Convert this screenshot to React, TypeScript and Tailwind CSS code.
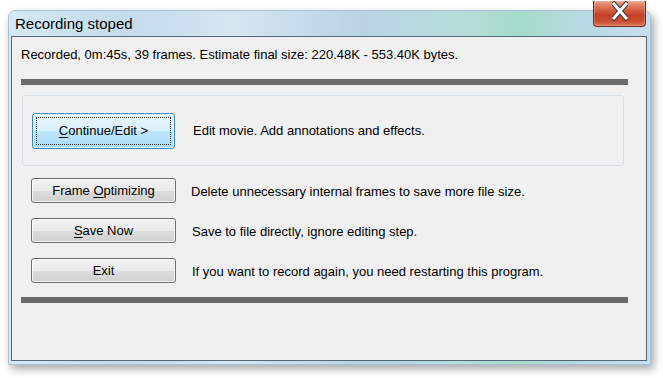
import type { ReactNode } from "react";

const font = { fontFamily: '"Liberation Sans", Arial, sans-serif' };

type ActionRowProps = {
  label: ReactNode;
  description: string;
  gap: string;
};

function GrayButton({ children }: { children: ReactNode }) {
  return (
    <button className="relative h-[25px] w-[145px] shrink-0 rounded-[3px] border border-[#707070] bg-[linear-gradient(180deg,#f2f2f2_0%,#ebebeb_50%,#dddddd_51%,#cfcfcf_100%)] text-[13px] text-black shadow-[inset_0_0_0_1px_rgba(255,255,255,0.8)]">
      {children}
    </button>
  );
}

function ActionRow({ label, description, gap }: ActionRowProps) {
  return (
    <div className={`ml-[10px] flex items-center ${gap}`}>
      <GrayButton>{label}</GrayButton>
      <span className="pt-[3px] text-[13px] text-black">{description}</span>
    </div>
  );
}

function CloseButton() {
  return (
    <div className="absolute right-[4px] top-[-10px] flex h-[26px] w-[53px] items-end justify-center rounded-b-[4px] border border-t-0 border-[#6e2a1c] bg-[linear-gradient(180deg,#e6a18c_0%,#d76a4f_30%,#c2432a_55%,#c94c31_80%,#dc7a5c_100%)] shadow-[inset_0_0_0_1px_rgba(255,200,180,0.35)]">
      {/* the X glyph is cut at the top, as in the screenshot */}
      <svg width="16" height="26" viewBox="0 0 16 26" className="mb-[0px]">
        <path
          d="M2 2 L14 16 M14 2 L2 16"
          stroke="#3c3c3c"
          strokeWidth="5"
          strokeLinecap="square"
          transform="translate(0,2)"
        />
        <path
          d="M2 2 L14 16 M14 2 L2 16"
          stroke="#ffffff"
          strokeWidth="3"
          strokeLinecap="square"
          transform="translate(0,2)"
        />
      </svg>
    </div>
  );
}

export default function App() {
  return (
    <div className="h-[378px] w-[663px] overflow-hidden bg-white" style={font}>
      <div className="relative ml-[8px] mt-[10px] flex h-[355px] w-[643px] flex-col rounded-t-[7px] border border-[#a9c2d6] bg-[linear-gradient(90deg,#d6e9f4_0%,#c3dbeb_18%,#d5e6f0_35%,#b9d3e4_55%,#b7dcd9_70%,#a6dccb_80%,#b9d9e3_90%,#c8deed_100%)] pb-[3px] pl-[2px] pr-[3px] shadow-[3px_4px_8px_rgba(0,0,0,0.35)]">
        <CloseButton />
        <div className="flex h-[25px] items-center pl-[4px] pt-[1px] text-[15px] text-black">
          Recording stoped
        </div>

        <div className="flex flex-1 flex-col border border-[#55677a] bg-[#f0f0f0] pl-[9px] pr-[18px]">
          <p className="mt-[10px] h-[16px] text-[13px] leading-[16px] text-black">
            Recorded, 0m:45s, 39 frames. Estimate final size: 220.48K - 553.40K bytes.
          </p>
          <div className="mt-[16px] h-[6px] bg-[#6b6b6b]" />

          <div className="ml-[1px] mr-[4px] mt-[10px] flex h-[71px] items-center rounded-[3px] border border-[#d5dfe7] pl-[9px]">
            <button className="relative flex h-[36px] w-[143px] shrink-0 items-center justify-center rounded-[3px] border border-[#3c8dbd] bg-[linear-gradient(180deg,#eaf6fd_0%,#d9f0fc_50%,#bee6fd_51%,#a9dbf6_100%)] text-[13px] text-black shadow-[inset_0_0_0_1px_rgba(255,255,255,0.6)]">
              <span className="absolute inset-[3px] border border-dotted border-[#2a2a2a]" />
              <span>
                <span className="underline underline-offset-2">C</span>ontinue/Edit &gt;
              </span>
            </button>
            <span className="ml-[18px] text-[13px] text-black">Edit movie. Add annotations and effects.</span>
          </div>

          <ActionRow
            gap="mt-[12px] gap-[15px]"
            label={
              <>
                Frame <span className="underline underline-offset-2">O</span>ptimizing
              </>
            }
            description="Delete unnecessary internal frames to save more file size."
          />
          <ActionRow
            gap="mt-[15px] gap-[16px]"
            label={
              <>
                <span className="underline underline-offset-2">S</span>ave Now
              </>
            }
            description="Save to file directly, ignore editing step."
          />
          <ActionRow
            gap="mt-[15px] gap-[16px]"
            label="Exit"
            description="If you want to record again, you need restarting this program."
          />

          <div className="mt-[14px] h-[6px] bg-[#6b6b6b]" />
        </div>
      </div>
    </div>
  );
}
